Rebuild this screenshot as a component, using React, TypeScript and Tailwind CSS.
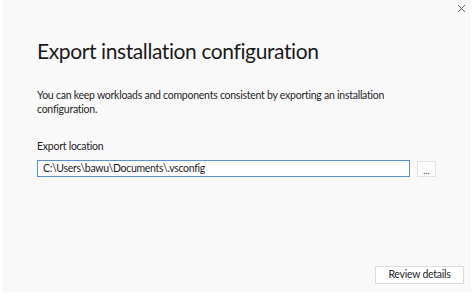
import React from "react";

/**
 * Export installation configuration dialog.
 */
export default function App() {
    return <div className="w-[474px] h-[296px] bg-white pl-[2px] pr-[3px] pb-[4px] font-['Lato',sans-serif]">
        <div className="relative w-full h-full bg-[#f9f9f9] flex flex-col pl-[35px] pr-[7px]">
            <button className="absolute right-[4px] top-[2px] w-[12px] h-[12px] flex items-center justify-center text-[#555]">
                <svg viewBox="0 0 10 10" className="w-[9px] h-[9px]" stroke="currentColor" strokeWidth="1">
                    <path d="M1 1L9 9M9 1L1 9"/>
                </svg>
            </button>
            <h1 className="mt-[36px] text-[21px] leading-[30px] tracking-[-0.4px] text-[#1b1b1b] font-normal">
                Export installation configuration
            </h1>
            <p className="mt-[22px] pr-[60px] text-[10.5px] leading-[14px] tracking-[-0.25px] text-[#262626]">
                You can keep workloads and components consistent by exporting an installation configuration.
            </p>
            <label className="mt-[23px] text-[10.5px] leading-[15px] tracking-[-0.25px] text-[#262626]">
                Export location
            </label>
            <div className="mt-[6px] flex items-center gap-[7px]">
                <div className="w-[373px] h-[17px] border border-[#5d8fd0] bg-white flex items-center pl-[5px] text-[10.5px] tracking-[-0.3px] text-[#1b1b1b]">
                    C:\Users\bawu\Documents\.vsconfig
                </div>
                <button className="w-[19px] h-[16px] border border-[#e3e3e3] bg-[#fbfbfb] text-[9px] leading-none text-[#444] flex items-center justify-center pt-[3px]">
                    ...
                </button>
            </div>
            <div className="mt-auto mb-[8px] flex justify-end">
                <button className="w-[89px] h-[18px] border border-[#dedede] bg-white text-[10.5px] tracking-[-0.25px] text-[#262626] flex items-center justify-center">
                    Review details
                </button>
            </div>
        </div>
    </div>;
}
